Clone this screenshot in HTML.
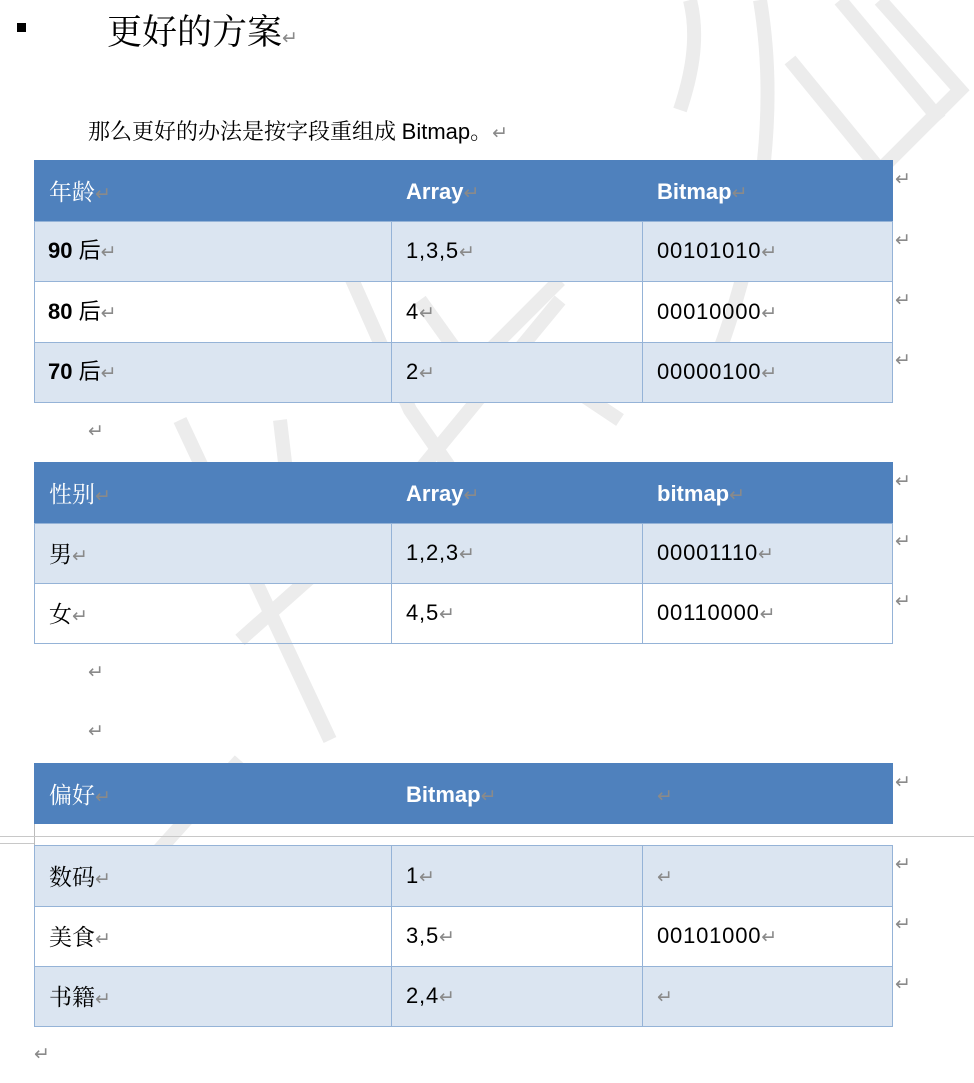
<!DOCTYPE html>
<html><head><meta charset="utf-8"><style>
body{margin:0;width:974px;height:1083px;background:#fff;position:relative;overflow:hidden;font-family:"Liberation Sans","Noto Sans CJK SC",sans-serif;}
.a{position:absolute;white-space:nowrap;}
.r{color:#8a8a8a;font-size:19px;font-family:"DejaVu Sans",sans-serif;font-weight:normal;}
.h{background:#4f81bd;}
.b{background:#dbe5f1;}
.cell{position:absolute;box-sizing:border-box;}
.t{position:absolute;font-size:22px;line-height:30px;white-space:nowrap;}
.n{letter-spacing:0.8px;}
.w{color:#fff;font-weight:bold;}
.cj{font-family:"Noto Serif CJK SC","Liberation Serif",serif;font-size:23px;font-weight:normal;}
</style></head><body>
<svg class="a" style="left:0;top:0" width="974" height="1083">
<g stroke="#ececec" stroke-width="14" fill="none" stroke-linecap="butt">
<path d="M690 0 C700 40 690 80 680 110"/>
<path d="M760 0 C780 120 760 260 700 400"/>
<path d="M880 0 L960 90 L880 170 L790 60"/>
<path d="M840 0 L940 120"/>
<path d="M180 420 L330 740"/>
<path d="M240 640 L330 560 L420 470 L560 300"/>
<path d="M280 420 L300 590"/>
<path d="M330 230 L410 410 L500 540"/>
<path d="M420 300 L470 370 L560 280"/>
<path d="M560 380 L620 420"/>
<path d="M150 860 L240 760"/>
</g></svg>
<div class="a" style="left:17px;top:23px;width:9px;height:9px;background:#000"></div>
<div class="a" style="left:107px;top:9px;font-family:'Noto Serif CJK SC',serif;font-size:35px;line-height:42px;">更好的方案<span class="r">↵</span></div>
<div class="a" style="left:88px;top:115px;font-size:22px;line-height:32px;font-family:'Noto Serif CJK SC',serif;">那么更好的办法是按字段重组成 <span style="font-family:'Liberation Sans',sans-serif">Bitmap</span>。<span class="r">↵</span></div>

<!-- table 1 -->
<div class="cell h" style="left:34px;top:160px;width:859px;height:61px"></div>
<div class="cell b" style="left:34px;top:221px;width:859px;height:61px;border:1px solid #95b3d7"></div>
<div class="cell" style="left:34px;top:281px;width:859px;height:62px;border:1px solid #95b3d7"></div>
<div class="cell b" style="left:34px;top:342px;width:859px;height:61px;border:1px solid #95b3d7"></div>
<div class="cell" style="left:391px;top:221px;width:1px;height:182px;background:#95b3d7"></div>
<div class="cell" style="left:642px;top:221px;width:1px;height:182px;background:#95b3d7"></div>
<div class="t w cj" style="left:49px;top:176px;">年龄<span class="r">↵</span></div>
<div class="t w" style="left:406px;top:177px">Array<span class="r">↵</span></div>
<div class="t w" style="left:657px;top:177px">Bitmap<span class="r">↵</span></div>
<div class="t" style="left:48px;top:236px"><b>90</b> 后<span class="r">↵</span></div>
<div class="t n" style="left:406px;top:236px">1,3,5<span class="r">↵</span></div>
<div class="t n" style="left:657px;top:236px">00101010<span class="r">↵</span></div>
<div class="t" style="left:48px;top:297px"><b>80</b> 后<span class="r">↵</span></div>
<div class="t n" style="left:406px;top:297px">4<span class="r">↵</span></div>
<div class="t n" style="left:657px;top:297px">00010000<span class="r">↵</span></div>
<div class="t" style="left:48px;top:357px"><b>70</b> 后<span class="r">↵</span></div>
<div class="t n" style="left:406px;top:357px">2<span class="r">↵</span></div>
<div class="t n" style="left:657px;top:357px">00000100<span class="r">↵</span></div>
<div class="a r" style="left:895px;top:168px">↵</div>
<div class="a r" style="left:895px;top:229px">↵</div>
<div class="a r" style="left:895px;top:289px">↵</div>
<div class="a r" style="left:895px;top:349px">↵</div>
<div class="a r" style="left:88px;top:420px">↵</div>

<!-- table 2 -->
<div class="cell h" style="left:34px;top:462px;width:859px;height:61px"></div>
<div class="cell b" style="left:34px;top:523px;width:859px;height:61px;border:1px solid #95b3d7"></div>
<div class="cell" style="left:34px;top:583px;width:859px;height:61px;border:1px solid #95b3d7"></div>
<div class="cell" style="left:391px;top:523px;width:1px;height:121px;background:#95b3d7"></div>
<div class="cell" style="left:642px;top:523px;width:1px;height:121px;background:#95b3d7"></div>
<div class="t w cj" style="left:49px;top:478px;">性别<span class="r">↵</span></div>
<div class="t w" style="left:406px;top:479px">Array<span class="r">↵</span></div>
<div class="t w" style="left:657px;top:479px">bitmap<span class="r">↵</span></div>
<div class="t cj" style="left:49px;top:538px">男<span class="r">↵</span></div>
<div class="t n" style="left:406px;top:538px">1,2,3<span class="r">↵</span></div>
<div class="t n" style="left:657px;top:538px">00001110<span class="r">↵</span></div>
<div class="t cj" style="left:49px;top:598px">女<span class="r">↵</span></div>
<div class="t n" style="left:406px;top:598px">4,5<span class="r">↵</span></div>
<div class="t n" style="left:657px;top:598px">00110000<span class="r">↵</span></div>
<div class="a r" style="left:895px;top:470px">↵</div>
<div class="a r" style="left:895px;top:530px">↵</div>
<div class="a r" style="left:895px;top:590px">↵</div>
<div class="a r" style="left:88px;top:661px">↵</div>
<div class="a r" style="left:88px;top:720px">↵</div>

<!-- table 3 -->
<div class="cell h" style="left:34px;top:763px;width:859px;height:61px"></div>
<div class="cell" style="left:34px;top:824px;width:1px;height:21px;background:#bbb"></div>
<div class="cell" style="left:0;top:836px;width:974px;height:1px;background:#c8c8c8"></div>
<div class="cell" style="left:0;top:843px;width:34px;height:1px;background:#c8c8c8"></div>
<div class="cell b" style="left:34px;top:845px;width:859px;height:62px;border:1px solid #95b3d7"></div>
<div class="cell" style="left:34px;top:906px;width:859px;height:61px;border:1px solid #95b3d7"></div>
<div class="cell b" style="left:34px;top:966px;width:859px;height:61px;border:1px solid #95b3d7"></div>
<div class="cell" style="left:391px;top:845px;width:1px;height:182px;background:#95b3d7"></div>
<div class="cell" style="left:642px;top:845px;width:1px;height:182px;background:#95b3d7"></div>
<div class="t w cj" style="left:49px;top:779px;">偏好<span class="r">↵</span></div>
<div class="t w" style="left:406px;top:780px">Bitmap<span class="r">↵</span></div>
<div class="t" style="left:657px;top:780px"><span class="r">↵</span></div>
<div class="t cj" style="left:49px;top:861px">数码<span class="r">↵</span></div>
<div class="t n" style="left:406px;top:861px">1<span class="r">↵</span></div>
<div class="t" style="left:657px;top:861px"><span class="r">↵</span></div>
<div class="t cj" style="left:49px;top:921px">美食<span class="r">↵</span></div>
<div class="t n" style="left:406px;top:921px">3,5<span class="r">↵</span></div>
<div class="t n" style="left:657px;top:921px">00101000<span class="r">↵</span></div>
<div class="t cj" style="left:49px;top:981px">书籍<span class="r">↵</span></div>
<div class="t n" style="left:406px;top:981px">2,4<span class="r">↵</span></div>
<div class="t" style="left:657px;top:981px"><span class="r">↵</span></div>
<div class="a r" style="left:895px;top:771px">↵</div>
<div class="a r" style="left:895px;top:853px">↵</div>
<div class="a r" style="left:895px;top:913px">↵</div>
<div class="a r" style="left:895px;top:973px">↵</div>
<div class="a r" style="left:34px;top:1043px">↵</div>
</body></html>
